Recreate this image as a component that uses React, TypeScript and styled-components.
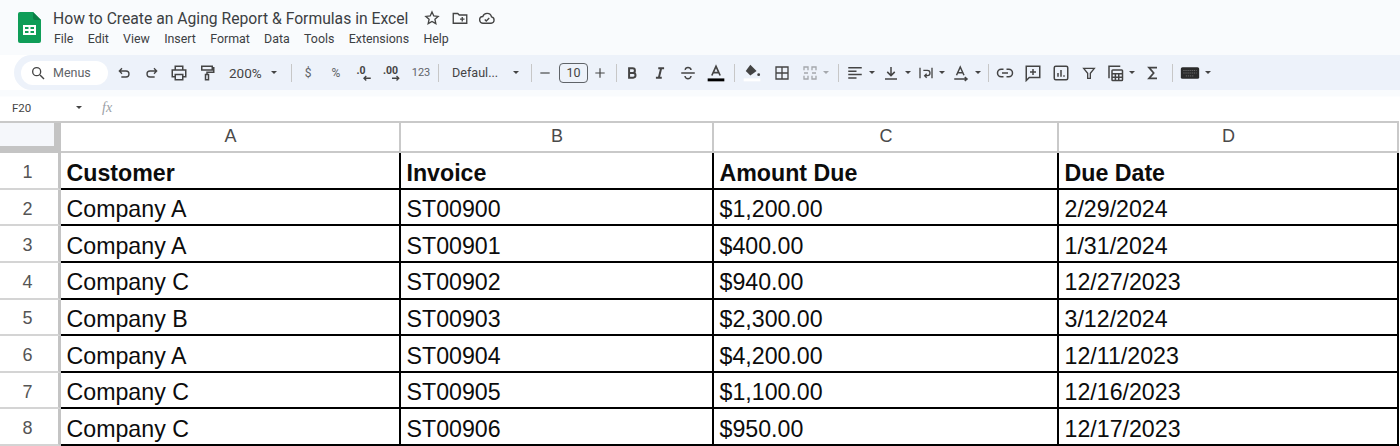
import React, { FC, ReactNode } from "react";
import styled, { createGlobalStyle } from "styled-components";

const GlobalStyle = createGlobalStyle`
  html, body {
    margin: 0;
    padding: 0;
    height: 446px;
    overflow: hidden;
    background: #fff;
    font-family: Roboto, "Liberation Sans", sans-serif;
  }
`;

const Page = styled.div`
  width: 1400px;
  height: 446px;
  overflow: hidden;
  display: flex;
  flex-direction: column;
`;

const TopBar = styled.header`
  height: 55px;
  background: #f9fbfd;
  display: flex;
  padding: 12px 0 0 18px;
  box-sizing: border-box;
`;

const Logo = styled.svg`
  width: 23px;
  height: 31px;
  flex: none;
`;

const TitleBlock = styled.div`
  margin-left: 12px;
  margin-top: -3px;
`;

const TitleRow = styled.div`
  display: flex;
  align-items: center;
  height: 18px;
`;

const Title = styled.div`
  font-size: 15.7px;
  color: #3c4043;
  white-space: nowrap;
  width: 370px;
`;

const TitleIcon = styled.svg`
  width: 18px;
  height: 18px;
  margin-right: 9.5px;
  fill: none;
  stroke: #444;
  stroke-width: 1.8;
`;

const MenuRow = styled.nav`
  display: flex;
  gap: 14.3px;
  margin-top: 4px;
  margin-left: 1px;
  font-size: 12.4px;
  color: #3c4043;
  line-height: 16px;
`;

const Toolbar = styled.div`
  margin-left: 14px;
  height: 36px;
  background: #edf2fa;
  border-radius: 18px 0 0 18px;
  display: flex;
  align-items: center;
  padding-left: 7px;
`;

const SearchPill = styled.div`
  width: 87px;
  height: 24px;
  margin-right: 2px;
  border-radius: 12px;
  background: #fff;
  display: flex;
  align-items: center;
  padding-left: 9px;
  box-sizing: border-box;
  gap: 7px;
  font-size: 12.5px;
  color: #5f6368;
`;

const Tool = styled.div<{ $w?: number; $dim?: boolean }>`
  width: ${(p) => p.$w ?? 28}px;
  flex: none;
  height: 24px;
  display: flex;
  align-items: center;
  justify-content: center;
  gap: 5px;
  font-size: 12px;
  color: #444;
  opacity: ${(p) => (p.$dim ? 0.42 : 1)};
`;

const ToolLabel = styled.div<{ $w: number; $pad: number; $gap: number; $size: number }>`
  width: ${(p) => p.$w}px;
  flex: none;
  height: 24px;
  display: flex;
  align-items: center;
  padding-left: ${(p) => p.$pad}px;
  box-sizing: border-box;
  gap: ${(p) => p.$gap}px;
  font-size: ${(p) => p.$size}px;
  color: #444;
  white-space: nowrap;
`;

const SmallText = styled.span<{ $size?: number }>`
  font-size: ${(p) => p.$size ?? 11}px;
  color: #5f6368;
`;

const Caret = styled.span`
  flex: none;
  width: 0;
  height: 0;
  border-left: 3.5px solid transparent;
  border-right: 3.5px solid transparent;
  border-top: 3.5px solid #444;
`;

const Sep = styled.span<{ $l: number; $r: number }>`
  flex: none;
  width: 1px;
  height: 18px;
  background: #c7c7c7;
  margin: 0 ${(p) => p.$r}px 0 ${(p) => p.$l}px;
`;

const SizeBox = styled.div`
  width: 29px;
  height: 20px;
  margin: 0 4px 0 5px;
  box-sizing: border-box;
  border: 1px solid #5f6368;
  border-radius: 4px;
  font-size: 12.5px;
  color: #444;
  display: flex;
  align-items: center;
  justify-content: center;
`;

const Glyph = styled.svg<{ $s?: number }>`
  width: ${(p) => p.$s ?? 18}px;
  height: ${(p) => p.$s ?? 18}px;
  flex: none;
  fill: none;
  stroke: #444;
  stroke-width: 2;
`;

const FormulaBar = styled.div`
  height: 31px;
  background: linear-gradient(#f9fbfd 0, #f9fbfd 6px, #fff 7px);
  display: flex;
  align-items: center;
  padding: 4px 0 0 12px;
  box-sizing: border-box;
  font-size: 11.5px;
  color: #444;
`;

const NameBox = styled.div`
  width: 70px;
  display: flex;
  align-items: center;
  justify-content: space-between;
  margin-right: 20px;
`;

const Fx = styled.span`
  font-family: "Liberation Serif", serif;
  font-style: italic;
  font-size: 14px;
  color: #9aa0a6;
`;

const Sheet = styled.div`
  display: grid;
  grid-template-columns: 61px 340px 313px 345px 340px;
  grid-template-rows: 30px repeat(8, 36.6px);
  width: 1399px;
  border-top: 2px solid #c9c9c9;
`;

const Corner = styled.div`
  background: #f5f7fb;
  box-sizing: border-box;
  border-right: 7px solid #c4c4c4;
  border-bottom: 7px solid #c4c4c4;
`;

const ColHead = styled.div`
  box-sizing: border-box;
  border-right: 2px solid #c9c9c9;
  border-bottom: 2px solid #c9c9c9;
  padding: 0 0 2px 1px;
  display: flex;
  align-items: center;
  justify-content: center;
  font-family: "Liberation Sans", sans-serif;
  font-size: 18px;
  color: #4a4a4a;
`;

const RowHead = styled.div`
  box-sizing: border-box;
  border-right: 3px solid #c4c4c4;
  border-bottom: 2px solid #d4d4d4;
  padding: 4px 3px 0 0;
  display: flex;
  align-items: center;
  justify-content: center;
  font-family: "Liberation Sans", sans-serif;
  font-size: 18px;
  color: #555;
`;

const Cell = styled.div<{ $bold?: boolean }>`
  box-sizing: border-box;
  border-right: 2.5px solid #000;
  border-bottom: 2.5px solid #000;
  padding: 5px 0 0 5.5px;
  display: flex;
  align-items: center;
  font-family: "Liberation Sans", sans-serif;
  font-size: 23.2px;
  font-weight: ${(p) => (p.$bold ? 700 : 400)};
  color: #0c0c0c;
  white-space: nowrap;
`;

const menus = ["File", "Edit", "View", "Insert", "Format", "Data", "Tools", "Extensions", "Help"];

const rows = [
  ["Customer", "Invoice", "Amount Due", "Due Date"],
  ["Company A", "ST00900", "$1,200.00", "2/29/2024"],
  ["Company A", "ST00901", "$400.00", "1/31/2024"],
  ["Company C", "ST00902", "$940.00", "12/27/2023"],
  ["Company B", "ST00903", "$2,300.00", "3/12/2024"],
  ["Company A", "ST00904", "$4,200.00", "12/11/2023"],
  ["Company C", "ST00905", "$1,100.00", "12/16/2023"],
  ["Company C", "ST00906", "$950.00", "12/17/2023"],
];

const Icon: FC<{ children: ReactNode; size?: number }> = ({ children, size }) => (
  <Glyph $s={size} viewBox="0 0 24 24">
    {children}
  </Glyph>
);

const solid = { fill: "#444", stroke: "none" };

const App: FC = () => {
  return (
    <Page>
      <GlobalStyle />
      <TopBar>
        <Logo viewBox="0 0 23 31">
          <path d="M2 0h13l8 8v21a2 2 0 0 1-2 2H2a2 2 0 0 1-2-2V2a2 2 0 0 1 2-2z" fill="#0f9d58" />
          <path d="M15 0l8 8h-6a2 2 0 0 1-2-2z" fill="#0b7f46" />
          <path d="M5 13h13v10H5z M7 15v2h3.5v-2z M12.5 15v2H16v-2z M7 19v2h3.5v-2z M12.5 19v2H16v-2z" fill="#fff" fillRule="evenodd" />
        </Logo>
        <TitleBlock>
          <TitleRow>
            <Title>How to Create an Aging Report &amp; Formulas in Excel</Title>
            <TitleIcon viewBox="0 0 24 24">
              <path d="M12 4l2.4 5.3 5.8.6-4.3 3.9 1.2 5.7L12 16.6l-5.1 2.9 1.2-5.7-4.3-3.9 5.8-.6z" />
            </TitleIcon>
            <TitleIcon viewBox="0 0 24 24">
              <path d="M3 6h6l2 2h10v11H3z M12 13.5h6 M15 10.5v6" />
            </TitleIcon>
            <TitleIcon viewBox="0 0 24 24">
              <path d="M7 19a4.5 4.5 0 0 1-.6-9A6 6 0 0 1 18 10.5a4.3 4.3 0 0 1-.5 8.5z M9 14l2 2 4-4" />
            </TitleIcon>
          </TitleRow>
          <MenuRow>
            {menus.map((m) => (
              <span key={m}>{m}</span>
            ))}
          </MenuRow>
        </TitleBlock>
      </TopBar>

      <Toolbar>
        <SearchPill>
          <Icon size={16}>
            <circle cx="10" cy="10" r="6" />
            <path d="M15 15l6 6" />
          </Icon>
          Menus
        </SearchPill>
        <Tool>
          <Icon size={16}><path d="M9 5L5 9l4 4 M5 9h10a4.5 4.5 0 0 1 0 9H8" /></Icon>
        </Tool>
        <Tool $w={27}>
          <Icon size={16}><path d="M15 5l4 4-4 4 M19 9H9a4.5 4.5 0 0 0 0 9h7" /></Icon>
        </Tool>
        <Tool>
          <Icon><path d="M7 8V3h10v5 M7 17H3V8h18v9h-4 M7 14h10v7H7z" /></Icon>
        </Tool>
        <Tool>
          <Icon><path d="M5 3h14v5H5z M19 5h2v6h-9v3 M10 14h4v7h-4z" /></Icon>
        </Tool>
        <ToolLabel $w={62} $pad={8} $gap={9} $size={13.5}>
          200%
          <Caret />
        </ToolLabel>
        <Sep $l={8} $r={2} />
        <Tool><SmallText $size={12}>$</SmallText></Tool>
        <Tool><SmallText $size={12}>%</SmallText></Tool>
        <Tool>
          <Icon>
            <text x="2" y="13" fontSize="14" fontWeight="700" fill="#444" stroke="none">.0</text>
            <path d="M21 19h-9 M15 16l-3 3 3 3" strokeWidth="1.8" />
          </Icon>
        </Tool>
        <Tool>
          <Icon>
            <text x="0" y="13" fontSize="14" fontWeight="700" fill="#444" stroke="none">.00</text>
            <path d="M12 19h9 M18 16l3 3-3 3" strokeWidth="1.8" />
          </Icon>
        </Tool>
        <Tool $w={30}><SmallText>123</SmallText></Tool>
        <Sep $l={2} $r={7} />
        <ToolLabel $w={79} $pad={6} $gap={15} $size={12.6}>
          Defaul...
          <Caret />
        </ToolLabel>
        <Sep $l={6} $r={4} />
        <Tool $w={18}>
          <Icon size={14}><path d="M4 12h16" /></Icon>
        </Tool>
        <SizeBox>10</SizeBox>
        <Tool $w={16}>
          <Icon size={14}><path d="M4 12h16 M12 4v16" /></Icon>
        </Tool>
        <Sep $l={8} $r={1} />
        <Tool>
          <Icon size={14}><path d="M7 4h6a4 4 0 0 1 0 8H7z M7 12h7a4 4 0 0 1 0 8H7z" strokeWidth="3.4" /></Icon>
        </Tool>
        <Tool>
          <Icon size={14}><path d="M9 4h10 M5 20h10 M14 4l-4 16" strokeWidth="3.4" /></Icon>
        </Tool>
        <Tool>
          <Icon><path d="M3 12h18 M16 8c0-2-2-3.5-4-3.5S8 6 8.500 8 M8 16c0 2 2 3.500 4 3.500s4-1.500 4-3.500" /></Icon>
        </Tool>
        <Tool>
          <Icon size={20}>
            <path d="M7 15l5-11 5 11 M8.500 11.500h7" />
            <rect x="2" y="18.500" width="20" height="3.500" {...solid} fill="#000" />
          </Icon>
        </Tool>
        <Sep $l={4} $r={3} />
        <Tool>
          <Icon size={20}>
            <path d="M10 2l7.500 7.500L10 15 4.500 9.500z" {...solid} />
            <circle cx="20" cy="14" r="1.700" {...solid} />
            <rect x="2" y="18.500" width="20" height="3.500" {...solid} fill="#fff" />
          </Icon>
        </Tool>
        <Tool style={{ marginLeft: 2 }}>
          <Icon size={16}><path d="M3 3h18v18H3z M12 3v18 M3 12h18" /></Icon>
        </Tool>
        <Tool $w={38} $dim>
          <Icon size={16}><path d="M3 8V3h6v5 M15 8V3h6v5 M3 16v5h6v-5 M15 16v5h6v-5 M3 12h6 M15 12h6" /></Icon>
          <Caret />
        </Tool>
        <Sep $l={4} $r={2} />
        <Tool $w={38}>
          <Icon><path d="M3 5h18 M3 9.500h11 M3 14h18 M3 18.500h11" /></Icon>
          <Caret />
        </Tool>
        <Tool $w={35}>
          <Icon><path d="M12 4v11 M7 10.500l5 5 5-5 M4 20h16" /></Icon>
          <Caret />
        </Tool>
        <Tool $w={35}>
          <Icon size={16}><path d="M3 4v16 M21 4v16 M8 8h6a3 3 0 0 1 0 8h-3 M13 13l-3 3 3 3" /></Icon>
          <Caret />
        </Tool>
        <Tool $w={35}>
          <Icon><path d="M6 15l5-11 5 11 M7.500 11.500h7 M3 20h16 M17 17.500l3 2.500-3 2.500" /></Icon>
          <Caret />
        </Tool>
        <Sep $l={4} $r={2} />
        <Tool>
          <Icon><path d="M10 7H7a5 5 0 0 0 0 10h3 M14 7h3a5 5 0 0 1 0 10h-3 M8 12h8" /></Icon>
        </Tool>
        <Tool>
          <Icon><path d="M3 3h18v15H7l-4 4z M12 6.500v8 M8 10.500h8" /></Icon>
        </Tool>
        <Tool>
          <Icon>
            <rect x="3" y="3" width="18" height="18" rx="2" />
            <path d="M8 17v-5 M12 17V8 M16 17v-2" />
          </Icon>
        </Tool>
        <Tool>
          <Icon size={16}><path d="M4 5h16l-6 7.500V20h-4v-7.500z" /></Icon>
        </Tool>
        <Tool $w={34}>
          <Icon>
            <path d="M19 3H4v16" />
            <rect x="8" y="8" width="14" height="14" rx="1" />
            <path d="M8 13h14 M8 17.500h14 M12.500 13v9 M17 13v9" />
          </Icon>
          <Caret />
        </Tool>
        <Tool $w={32}>
          <Icon size={16}><path d="M18 4H6l7 8-7 8h12" strokeWidth="2.6" /></Icon>
        </Tool>
        <Sep $l={3} $r={3} />
        <Tool $w={38}>
          <Icon size={20}>
            <rect x="1" y="5" width="22" height="14" rx="2" {...solid} fill="#2b2b2b" />
            <path d="M4 9h16 M4 12h16 M7 15.500h10" stroke="#777" strokeWidth="1" strokeDasharray="1.500 1" />
          </Icon>
          <Caret />
        </Tool>
      </Toolbar>

      <FormulaBar>
        <NameBox>
          F20
          <Caret />
        </NameBox>
        <Fx>fx</Fx>
      </FormulaBar>

      <Sheet>
        <Corner />
        {["A", "B", "C", "D"].map((c) => (
          <ColHead key={c}>{c}</ColHead>
        ))}
        {rows.map((row, i) => (
          <React.Fragment key={i}>
            <RowHead>{i + 1}</RowHead>
            {row.map((value, j) => (
              <Cell key={j} $bold={i === 0}>
                {value}
              </Cell>
            ))}
          </React.Fragment>
        ))}
      </Sheet>
    </Page>
  );
};

export default App;
